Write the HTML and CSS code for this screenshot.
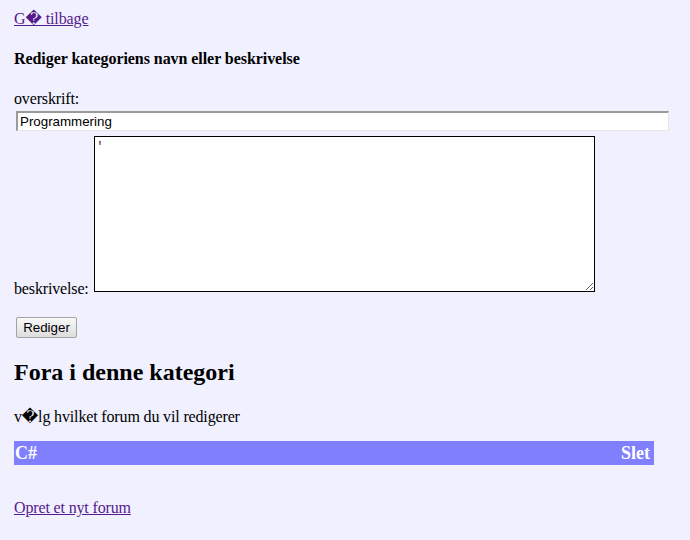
FILE: index.html
```html
<!DOCTYPE html>
<html>
<head>
<meta charset="utf-8">
<link rel="stylesheet" href="styles.css">
</head>
<body>
<a class="back" href="#">G&#xFFFD; tilbage</a>
<h4 class="edit-title">Rediger kategoriens navn eller beskrivelse</h4>
<form class="edit-form">
  <div class="field-label">overskrift:</div>
  <input class="title-input" type="text" value="Programmering">
  <div class="desc-row">
    <span class="desc-label">beskrivelse:</span>
    <textarea class="desc-input">'</textarea>
  </div>
  <button class="submit" type="button">Rediger</button>
</form>
<h2 class="section-title">Fora i denne kategori</h2>
<p class="hint">v&#xFFFD;lg hvilket forum du vil redigerer</p>
<div class="forum-bar">
  <span class="forum-name">C#</span>
  <span class="forum-delete">Slet</span>
</div>
<a class="new-forum" href="#">Opret et nyt forum</a>
</body>
</html>
```

FILE: styles.css
```css
html, body {
  background: #f0f0ff;
}
body {
  margin: 0;
  padding: 10px 14px 0 14px;
  font-family: "Liberation Serif", "DejaVu Serif", serif;
  font-size: 16px;
  letter-spacing: -0.15px;
  color: #000;
}
a {
  color: #551a8b;
}
.back {
  display: block;
  width: max-content;
  line-height: 18px;
  letter-spacing: -0.1px;
}
.edit-title {
  font-size: 16px;
  font-weight: bold;
  margin: 22px 0 22px 0;
  line-height: 18px;
  letter-spacing: -0.06px;
}
.edit-form {
  margin: 0;
}
.field-label {
  line-height: 18px;
  height: 19px;
}
.title-input {
  display: block;
  box-sizing: border-box;
  width: 653px;
  height: 20px;
  margin: 2px 0 0 2px;
  padding: 1px 2px;
  border-style: solid;
  border-width: 2px 1px 1px 2px;
  border-color: #9a9a9a #e6e6e6 #e6e6e6 #9a9a9a;
  background: #fff;
  font-family: "Liberation Sans", Arial, sans-serif;
  font-size: 13.33px;
  letter-spacing: 0;
  color: #000;
  outline: none;
}
.desc-row {
  display: flex;
  align-items: flex-end;
  margin-top: 5px;
}
.desc-label {
  flex: none;
  width: 75px;
  line-height: 18px;
  margin-bottom: -6px;
  white-space: nowrap;
}
.desc-input {
  flex: none;
  box-sizing: border-box;
  width: 501px;
  height: 156px;
  margin: 0 0 0 5px;
  padding: 2px 1px;
  border: 1px solid #000;
  background: #fff;
  font-family: "Liberation Mono", monospace;
  font-size: 13px;
  letter-spacing: 0;
  color: #4a2a20;
  display: block;
}
.submit {
  display: block;
  box-sizing: border-box;
  width: 61px;
  height: 21px;
  margin: 25px 0 0 2px;
  padding: 0;
  border: 1px solid #a3a3a3;
  border-radius: 2px;
  background: linear-gradient(#f8f8f8, #dddddd);
  font-family: "Liberation Sans", Arial, sans-serif;
  font-size: 13.33px;
  letter-spacing: 0;
  color: #000;
}
.section-title {
  font-size: 24px;
  font-weight: bold;
  line-height: 28px;
  letter-spacing: 0;
  margin: 20px 0 22px 0;
}
.hint {
  margin: 0 0 15px 0;
  line-height: 18px;
}
.forum-bar {
  display: flex;
  justify-content: space-between;
  align-items: center;
  box-sizing: border-box;
  width: 640px;
  height: 24px;
  padding: 0 4px 0 1px;
  background: #8080ff;
  color: #fff;
  font-weight: bold;
  font-size: 18px;
  letter-spacing: 0;
}
.new-forum {
  display: block;
  width: max-content;
  margin-top: 34px;
  line-height: 18px;
}
```
